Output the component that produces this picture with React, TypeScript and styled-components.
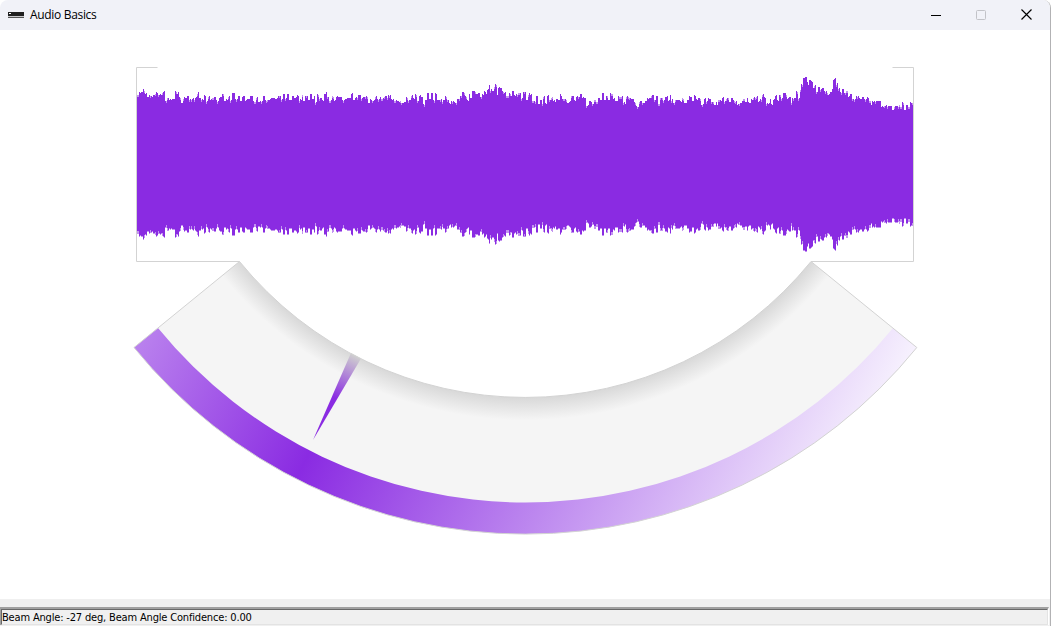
import React from 'react';
import styled, { createGlobalStyle } from 'styled-components';

const GlobalStyle = createGlobalStyle`
  * { box-sizing: border-box; }
  html, body { margin: 0; padding: 0; background: #fff; }
`;

const Window = styled.main`
  display: flex;
  flex-direction: column;
  width: 1051px;
  height: 626px;
  overflow: hidden;
  background: #fff;
  border-right: 1px solid #b2b2b4;
  border-radius: 8px 8px 0 0;
`;

const TitleBar = styled.header`
  display: flex;
  align-items: center;
  flex: 0 0 30px;
  padding-left: 8px;
  background: #f1f2f8;
`;

const Title = styled.h1`
  flex: 1;
  margin: 0 0 0 6px;
  font: 400 12px/30px "Open Sans", sans-serif;
  letter-spacing: -0.32px;
  color: #000;
`;

const CaptionButton = styled.button<{ $dim?: boolean }>`
  display: flex;
  align-items: center;
  justify-content: center;
  width: 45.5px;
  height: 28px;
  padding: 0;
  border: 0;
  background: none;
  color: ${p => (p.$dim ? '#c2c3c8' : '#000')};
`;

const CaptionIcon = styled.svg`
  display: block;
  margin: 0 1px 1px 0;
`;

const Content = styled.section`
  flex: 0 0 569px;
  svg { display: block; }
`;

const Footer = styled.footer`
  flex: 1;
  padding: 8px 1px 0 0;
  background: #f0f0f0;
`;

const StatusBar = styled.div`
  height: 18px;
  border-top: 2px solid #a0a0a0;
  border-left: 1px solid #a0a0a0;
  border-right: 1px solid #fff;
`;

const StatusText = styled.div`
  height: 16px;
  border: 1px solid #e3e3e3;
  border-top-color: #696969;
  border-left-color: #696969;
  font: 400 11px/15px "DejaVu Sans Condensed", "DejaVu Sans", sans-serif;
  letter-spacing: -0.17px;
  white-space: nowrap;
  color: #000;
`;

/* Energy envelope as [offset, level] pairs, three units per pixel; smaller levels are louder. */
const SEGMENTS: { start: number; points: number[] }[] = [
  { start: 130, points: [20,102,36,98,44,90,48,102,54,112,60,106,64,112,72,104,80,99,90,104,102,96,108,122,114,114,122,120,130,118,138,94,144,100,150,112,158,128,162,114,168,116,174,108,180,118,190,116,198,112,204,99,210,114,218,118,224,108,232,124,238,108,242,120,250,112,264,124,272,112,280,102,284,122,292,120,298,108,302,120,312,99,318,118,328,108,332,122,340,110,348,122,356,118,364,108,374,124,380,112,386,128,394,124,402,110,406,120,416,118,430,114,440,116,450,108,456,118,464,102,468,114,474,102,480,120,490,110,496,114,504,108,512,120,518,102,522,124,530,108,536,122,544,102,548,118,554,108,558,128,564,104,572,116,580,122,584,102,590,96,594,110,602,120,608,108,616,122,622,110,630,112,640,120,650,116,660,114,666,102,672,118,680,114,690,106,694,114,702,112,710,108,718,130,724,120,732,122,738,108,744,118,756,114,770,110,780,105,786,120,796,122,809,126] },
  { start: 400, points: [0,122,8,128,14,126,20,114,30,120,38,106,42,116,47,102,54,122,60,106,68,112,72,134,78,120,84,102,90,120,96,102,102,122,108,102,116,120,124,118,130,122,138,110,144,120,150,130,158,124,168,128,176,116,184,106,190,96,200,108,204,124,208,102,214,116,220,96,226,94,230,102,238,100,244,110,250,106,254,96,260,104,264,88,268,78,272,90,278,92,284,80,287,72,292,104,296,84,302,84,308,94,314,98,322,106,330,100,334,108,340,94,346,108,352,102,356,98,360,98,366,116,374,96,380,120,386,102,394,104,398,120,406,124,412,108,418,134,424,122,428,130,432,108,438,130,442,106,450,120,456,110,464,124,472,116,478,122,484,106,490,116,498,118,504,130,510,126,518,106,524,122,530,110,536,110,542,102,548,114,556,116,562,136,570,126,580,132,586,118,592,124,598,116,602,120,608,100,614,120,620,106,626,120,635,100,642,116,650,122,656,108,666,108,672,126,676,134,682,110,690,112,698,120,704,128,712,139,720,124,730,128,738,122,746,116,758,106,766,118,772,108,778,130,784,114,792,120,800,110,809,122] },
  { start: 670, points: [0,106,6,120,12,128,18,118,26,120,34,126,40,114,46,130,54,122,62,110,68,122,74,108,80,120,90,114,98,134,104,116,110,124,120,118,128,124,134,136,140,126,144,137,146,118,154,122,158,114,166,124,172,114,180,126,186,114,190,122,198,124,204,134,212,130,218,122,222,116,228,126,232,114,238,128,246,118,254,112,260,108,266,124,274,118,280,102,284,114,290,128,296,132,302,118,306,134,312,120,318,108,324,122,330,104,336,114,344,98,350,102,354,116,360,112,364,126,370,114,376,116,380,94,388,114,392,88,396,72,402,54,407,52,412,66,416,75,420,62,426,66,430,84,436,76,442,94,448,80,454,88,460,86,466,94,470,96,478,104,484,96,488,88,492,60,496,56,502,72,508,84,514,96,520,86,526,98,532,92,538,110,544,102,550,116,556,118,562,108,570,116,580,112,586,118,594,114,600,120,604,134,610,124,620,123,630,124,638,140,648,136,656,138,662,138,668,150,674,138,684,138,688,132,694,140,700,126,706,150,712,134,718,138,724,128,732,137] },
];

const CENTER_Y = 164;

function levelAt(x: number): number {
  const segment = [...SEGMENTS].reverse().find(s => x >= s.start) ?? SEGMENTS[0];
  const offset = (x - segment.start) * 3 + 1;
  const p = segment.points;
  for (let i = 0; i < p.length - 2; i += 2) {
    if (offset <= p[i + 2]) {
      const t = (offset - p[i]) / (p[i + 2] - p[i]);
      return 60 + (t < 0.5 ? p[i + 1] : p[i + 3]) / 3;
    }
  }
  return 60 + p[p.length - 1] / 3;
}

const columns = Array.from({ length: 776 }, (_, i) => {
  const x = 137 + i;
  const noise = Math.abs(Math.sin(x * 12.9898) * 43758.5453) % 1;
  const top = Math.round(levelAt(x) + (noise - 0.5) * 1.8);
  return { x, top, bottom: 2 * CENTER_Y - top, soft: noise > 0.72 ? 2 : 0 };
});

const solidWave = columns
  .map(c => `M${c.x} ${c.top + c.soft}h1V${c.bottom - c.soft}h-1z`)
  .join('');
const softWave = columns
  .map(c => `M${c.x} ${c.top}h1V${c.bottom + 1}h-1z`)
  .join('');

const PANEL = 'M239.500 261.500A368.300 368.300 0 0 0 811 261.500L916.800 347.500A503.800 503.800 0 0 1 134 347.500Z';
const BAND = 'M158 328A474.300 474.300 0 0 0 893 328L916.800 347.500A503.800 503.800 0 0 1 134 347.500Z';

function Beam() {
  return (
    <svg width="1050" height="569" viewBox="0 30 1050 569">
      <defs>
        <radialGradient id="panel" gradientUnits="userSpaceOnUse" cx="525.5" cy="29.2" r="504.5">
          <stop offset="0.731" stopColor="#d9d9d9" />
          <stop offset="0.775" stopColor="#f5f5f5" />
        </radialGradient>
        <linearGradient id="confidence" gradientUnits="userSpaceOnUse" x1="80" y1="-198.500" x2="971" y2="255.500">
          <stop offset="0" stopColor="#fff" />
          <stop offset="0.5" stopColor="#8a2be2" />
          <stop offset="1" stopColor="#f8f4fe" />
        </linearGradient>
        <linearGradient id="needle" gradientUnits="userSpaceOnUse" x1="356" y1="356" x2="313" y2="440">
          <stop offset="0" stopColor="#cfcfcf" />
          <stop offset="0.5" stopColor="#8a2be2" />
          <stop offset="1" stopColor="#8a2be2" />
        </linearGradient>
      </defs>
      <path d="M157.500 67.500H136.500V261.500H239.500M892.500 67.500H913.500V261.500H811" fill="none" stroke="#d3d3d3" />
      <path d={softWave} fill="#c293f0" shapeRendering="crispEdges" />
      <path d={solidWave} fill="#8a2be2" shapeRendering="crispEdges" />
      <path d={PANEL} fill="url(#panel)" />
      <path d={BAND} fill="url(#confidence)" />
      <path d="M351 353L361 358.500L313 440Z" fill="url(#needle)" />
      <path d={PANEL} fill="none" stroke="#d3d3d3" />
    </svg>
  );
}

export default function App() {
  return (
    <Window>
      <GlobalStyle />
      <TitleBar>
        <svg width="16" height="6" viewBox="0 0 16 6" shapeRendering="crispEdges">
          <path d="M0 0h16v4H0z" fill="#202020" />
          <path d="M1 1h2v1H1z" fill="#fff" />
          <path d="M0 4h16v1H0z" fill="#c9c9cc" />
          <path d="M0 5h16v1H0z" fill="#555" />
        </svg>
        <Title>Audio Basics</Title>
        <CaptionButton aria-label="Minimize">
          <CaptionIcon width="10" height="10"><path d="M0 5.500h10" stroke="currentColor" /></CaptionIcon>
        </CaptionButton>
        <CaptionButton aria-label="Maximize" $dim disabled>
          <CaptionIcon width="10" height="10"><rect x=".5" y=".5" width="9" height="9" rx="1" fill="none" stroke="currentColor" /></CaptionIcon>
        </CaptionButton>
        <CaptionButton aria-label="Close">
          <CaptionIcon width="11" height="11"><path d="M.5 .5l10 10M10.500 .5l-10 10" stroke="currentColor" strokeWidth="1.150" /></CaptionIcon>
        </CaptionButton>
      </TitleBar>
      <Content><Beam /></Content>
      <Footer>
        <StatusBar>
          <StatusText>Beam Angle: -27 deg, Beam Angle Confidence: 0.00</StatusText>
        </StatusBar>
      </Footer>
    </Window>
  );
}
